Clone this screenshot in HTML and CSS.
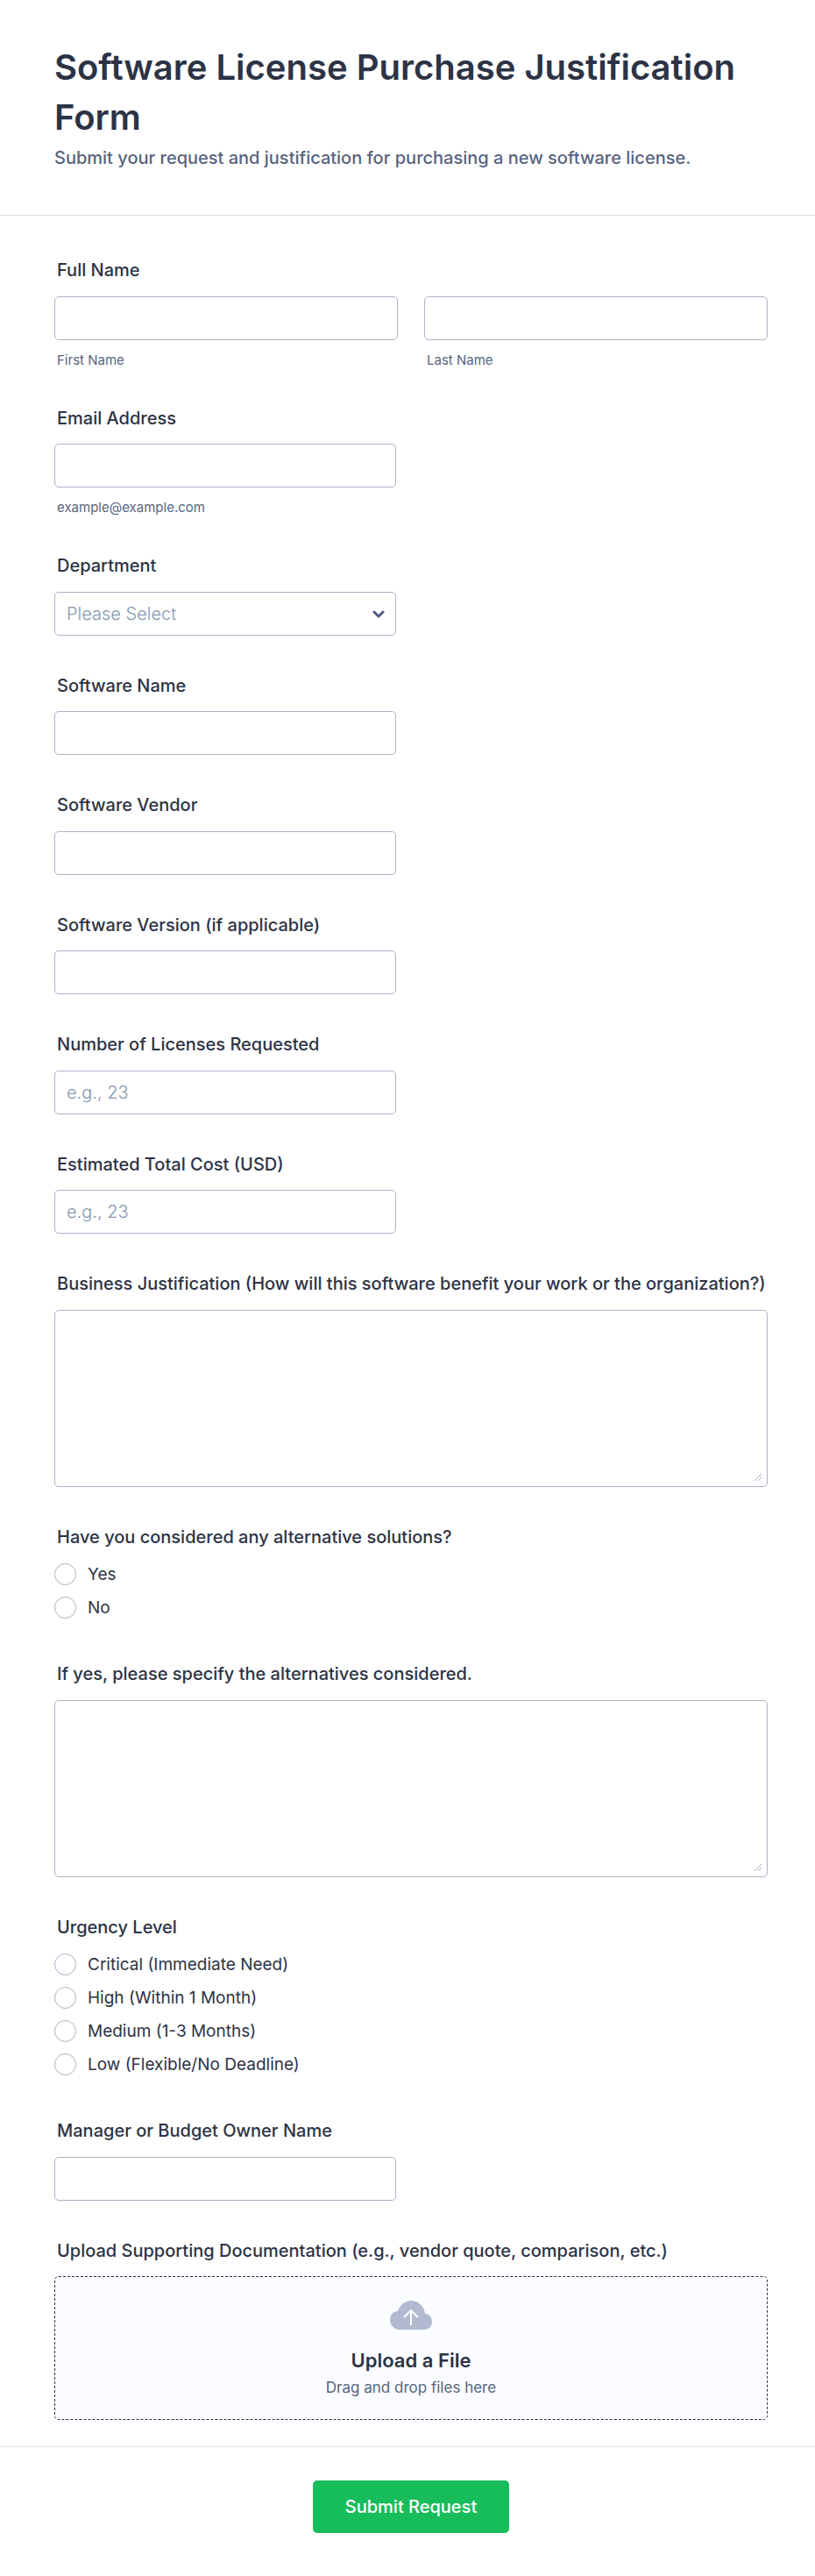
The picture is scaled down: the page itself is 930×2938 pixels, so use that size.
FILE: index.html
```html
<!DOCTYPE html>
<html lang="en">
<head>
<meta charset="utf-8">
<meta name="viewport" content="width=device-width, initial-scale=1">
<title>Software License Purchase Justification Form</title>
<link rel="stylesheet" href="styles.css">
</head>
<body>
<form class="form">
  <header class="form-header">
    <h1 class="form-title">Software License Purchase Justification Form</h1>
    <p class="form-subtitle">Submit your request and justification for purchasing a new software license.</p>
  </header>

  <div class="fields">
    <div class="field" role="group" aria-labelledby="full-name">
      <span class="label" id="full-name">Full Name</span>
      <div class="name-row">
        <div class="name-part">
          <input class="control" type="text" id="first-name">
          <label class="hint" for="first-name">First Name</label>
        </div>
        <div class="name-part">
          <input class="control" type="text" id="last-name">
          <label class="hint" for="last-name">Last Name</label>
        </div>
      </div>
    </div>

    <div class="field">
      <label class="label" for="email">Email Address</label>
      <input class="control half" type="email" id="email" aria-describedby="email-hint">
      <span class="hint" id="email-hint">example@example.com</span>
    </div>

    <div class="field">
      <label class="label" for="department">Department</label>
      <div class="select-wrap half">
        <select class="control" id="department">
          <option>Please Select</option>
        </select>
        <svg class="chevron" viewBox="0 0 14 9" aria-hidden="true"><path d="M2 2l5 5 5-5"/></svg>
      </div>
    </div>

    <div class="field">
      <label class="label" for="software-name">Software Name</label>
      <input class="control half" type="text" id="software-name">
    </div>

    <div class="field">
      <label class="label" for="software-vendor">Software Vendor</label>
      <input class="control half" type="text" id="software-vendor">
    </div>

    <div class="field">
      <label class="label" for="software-version">Software Version (if applicable)</label>
      <input class="control half" type="text" id="software-version">
    </div>

    <div class="field">
      <label class="label" for="licenses">Number of Licenses Requested</label>
      <input class="control half" type="text" inputmode="numeric" id="licenses" placeholder="e.g., 23">
    </div>

    <div class="field">
      <label class="label" for="cost">Estimated Total Cost (USD)</label>
      <input class="control half" type="text" inputmode="numeric" id="cost" placeholder="e.g., 23">
    </div>

    <div class="field">
      <label class="label" for="justification">Business Justification (How will this software benefit your work or the organization?)</label>
      <div class="area-wrap">
        <textarea class="control area" id="justification"></textarea>
        <svg class="grip" viewBox="0 0 10 10" aria-hidden="true"><path d="M1 9l8-8M5 9l4-4"/></svg>
      </div>
    </div>

    <div class="field" role="radiogroup" aria-labelledby="alt-label">
      <span class="label" id="alt-label">Have you considered any alternative solutions?</span>
      <div class="options">
        <label class="option"><input class="radio" type="radio" name="alternatives">Yes</label>
        <label class="option"><input class="radio" type="radio" name="alternatives">No</label>
      </div>
    </div>

    <div class="field">
      <label class="label" for="alt-details">If yes, please specify the alternatives considered.</label>
      <div class="area-wrap">
        <textarea class="control area" id="alt-details"></textarea>
        <svg class="grip" viewBox="0 0 10 10" aria-hidden="true"><path d="M1 9l8-8M5 9l4-4"/></svg>
      </div>
    </div>

    <div class="field" role="radiogroup" aria-labelledby="urgency-label">
      <span class="label" id="urgency-label">Urgency Level</span>
      <div class="options">
        <label class="option"><input class="radio" type="radio" name="urgency">Critical (Immediate Need)</label>
        <label class="option"><input class="radio" type="radio" name="urgency">High (Within 1 Month)</label>
        <label class="option"><input class="radio" type="radio" name="urgency">Medium (1-3 Months)</label>
        <label class="option"><input class="radio" type="radio" name="urgency">Low (Flexible/No Deadline)</label>
      </div>
    </div>

    <div class="field">
      <label class="label" for="manager">Manager or Budget Owner Name</label>
      <input class="control half" type="text" id="manager">
    </div>

    <div class="field">
      <span class="label" id="upload-label">Upload Supporting Documentation (e.g., vendor quote, comparison, etc.)</span>
      <label class="dropzone">
        <input class="file-input" type="file" aria-labelledby="upload-label">
        <svg class="cloud" viewBox="0 0 48 34" aria-hidden="true">
          <path class="cloud-shape" d="M11 33C5 33 0 28 0 22 0 16 4 12 9 12 11 5 17 0 24 0c8 0 15 6 16 15 5 0 8 4 8 9 0 5-4 9-9 9z"/>
          <path class="cloud-arrow" d="M24 28V11M16 19l8-8 8 8"/>
        </svg>
        <span class="drop-title">Upload a File</span>
        <span class="drop-text">Drag and drop files here</span>
      </label>
    </div>
  </div>

  <footer class="form-footer">
    <button class="submit" type="submit">Submit Request</button>
  </footer>
</form>
</body>
</html>
```
FILE: styles.css
```css
* {
  box-sizing: border-box;
}

body {
  margin: 0;
  background: #fff;
  color: #2c3345;
  font-family: Inter, "Liberation Sans", sans-serif;
  font-size: 20px;
}

.form-header {
  padding: 48px 54px 47px 62px;
  border-bottom: 1px solid #d3d9e5;
}

.form-title {
  margin: 0;
  font-size: 40px;
  font-weight: 600;
  line-height: 57px;
}

.form-subtitle {
  margin: 0;
  color: #57647e;
  font-size: 20px;
  font-weight: 500;
  line-height: 36px;
}

.fields {
  display: flex;
  flex-direction: column;
  gap: 43px;
  padding: 48px 54px 30px 62px;
}

.field {
  display: flex;
  flex-direction: column;
  align-items: stretch;
}

.label {
  padding: 0 0 15px 3px;
  font-weight: 500;
  line-height: 1.425;
}

.control {
  display: block;
  width: 100%;
  height: 50px;
  margin: 0;
  padding: 0 13px;
  border: 1px solid #acb2c6;
  border-radius: 5px;
  background: #fff;
  color: #2c3345;
  font-family: inherit;
  font-size: 20px;
  font-weight: 300;
}

.control::placeholder {
  color: #8498b0;
  opacity: 1;
}

.half {
  width: 390px;
  max-width: 100%;
}

.area-wrap {
  position: relative;
}

.area {
  height: 202px;
  padding: 12px 13px;
  resize: vertical;
}

.area::-webkit-resizer {
  display: none;
}

.grip {
  position: absolute;
  right: 6px;
  bottom: 6px;
  width: 10px;
  height: 10px;
  fill: none;
  stroke: #acb2c6;
  pointer-events: none;
}

.hint {
  display: block;
  padding: 13px 3px 0;
  color: #57647e;
  font-size: 15px;
  line-height: 19px;
}

.name-row {
  display: flex;
  gap: 30px;
}

.name-part {
  flex: 1;
}

.select-wrap {
  position: relative;
}

.select-wrap .control {
  appearance: none;
  color: #8498b0;
}

.chevron {
  position: absolute;
  top: 21px;
  right: 13px;
  width: 14px;
  height: 9px;
  fill: none;
  stroke: #4f5b7c;
  stroke-width: 3;
  stroke-linecap: round;
  stroke-linejoin: round;
  pointer-events: none;
}

.options {
  margin-top: -6px;
}

.option {
  display: flex;
  align-items: center;
  gap: 13px;
  height: 38px;
  font-size: 19px;
}

.radio {
  appearance: none;
  width: 25px;
  height: 25px;
  margin: 0;
  border: 1px solid #acb2c6;
  border-radius: 50%;
  background: #fff;
}

.radio:checked {
  border: 8px solid #4f5b7c;
}

.dropzone {
  position: relative;
  display: flex;
  flex-direction: column;
  align-items: center;
  height: 164px;
  padding-top: 27px;
  border: 1px dashed #2c3345;
  border-radius: 5px;
  background: #fbfcff;
}

.file-input {
  position: absolute;
  inset: 0;
  width: 100%;
  opacity: 0;
}

.cloud {
  width: 48px;
  height: 34px;
}

.cloud-shape {
  fill: #b1bad0;
}

.cloud-arrow {
  fill: none;
  stroke: #fff;
  stroke-width: 2;
}

.drop-title {
  margin-top: 19px;
  font-size: 22px;
  font-weight: 600;
  line-height: 30px;
}

.drop-text {
  color: #57647e;
  font-size: 17px;
  line-height: 32px;
}

.form-footer {
  display: flex;
  justify-content: center;
  padding: 38px 54px 49px 62px;
  border-top: 1px solid #e4e9f0;
}

.submit {
  height: 60px;
  padding: 0 37px;
  border: 0;
  border-radius: 5px;
  background: #18bd5b;
  color: #fff;
  font-family: inherit;
  font-size: 20px;
  font-weight: 500;
}
```
